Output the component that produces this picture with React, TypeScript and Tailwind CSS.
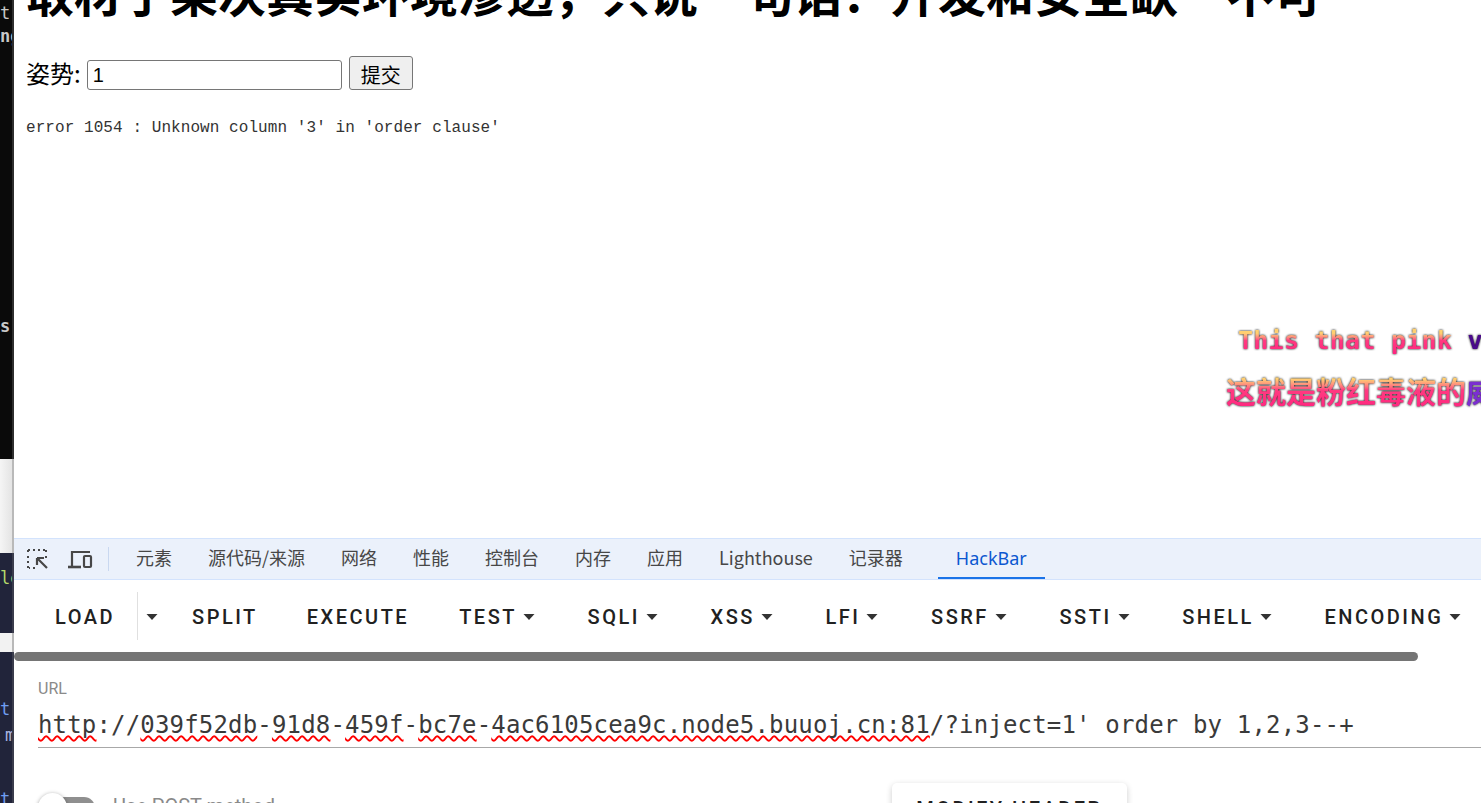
const tabs = ['元素', '源代码/来源', '网络', '性能', '控制台', '内存', '应用', 'Lighthouse', '记录器']
const menus = ['TEST', 'SQLI', 'XSS', 'LFI', 'SSRF', 'SSTI', 'SHELL', 'ENCODING']
const urlWords = ['039f52db', '91d8', '459f', 'bc7e']

function Caret() {
  return (
    <svg width="12" height="6" viewBox="0 0 12 6" className="shrink-0">
      <path d="M0.5 0h11L6 6z" fill="#333333" />
    </svg>
  )
}

function Squiggle({ children }: { children: React.ReactNode }) {
  return <span className="underline decoration-wavy decoration-[#ff0000] decoration-[1.5px] underline-offset-[2px] [text-decoration-skip-ink:none]">{children}</span>
}

function SideStrip() {
  return (
    <div className="w-[14px] shrink-0 flex flex-col overflow-hidden font-['DejaVu_Sans_Mono',monospace] text-[17px] leading-[26px]">
      <div className="h-[459px] bg-[#0a0a0a] border-r-2 border-[#2e2e2e] text-[#c8c8c8] overflow-hidden">
        <div className="whitespace-nowrap">t</div>
        <div className="-mt-[3px] whitespace-nowrap font-bold">ng</div>
        <div className="mt-[264px] whitespace-nowrap font-bold">s</div>
      </div>
      <div className="h-[94px] bg-gradient-to-r from-[#f5f5f5] to-[#e4e4e4] border-r-2 border-[#b9b9b9]" />
      <div className="h-[80px] bg-[#21243a] border-r-2 border-[#3a3c4c] pt-3 text-[#b5d96b] overflow-hidden whitespace-nowrap">le</div>
      <div className="h-[19px] bg-[#f2f2f2] border-r-2 border-[#b9b9b9]" />
      <div className="flex-1 bg-[#21243a] border-r-2 border-[#3a3c4c] pt-[44px] text-[#6f9df0] overflow-hidden whitespace-nowrap">
        <div>t:</div>
        <div className="pl-[5px] text-[#a9b4e0]">m</div>
        <div className="mt-[38px]">t:</div>
      </div>
    </div>
  )
}

function PageArea() {
  return (
    <div className="relative h-[538px] shrink-0 overflow-hidden bg-white pl-3 text-black font-['Noto_Sans_CJK_SC',sans-serif]">
      <h1 className="text-[48px] leading-[56px] font-bold whitespace-nowrap -mt-[37px]">取材于某次真实环境渗透，只说一句话：开发和安全缺一不可</h1>
      <form className="flex items-end mt-[37px] text-[24px] leading-[34px]">
        <span className="mr-[6px]">姿势:</span>
        <input
          readOnly
          value="1"
          className="w-[255px] h-[30px] rounded-[3px] border border-[#767676] bg-white px-[5px] text-[20px] font-['Liberation_Sans',sans-serif] outline-none"
        />
        <button type="button" className="ml-[7px] w-[64px] h-[34px] pt-[3px] rounded-[3px] border border-[#767676] bg-[#efefef] text-[20px] leading-none">提交</button>
      </form>
      <p className="mt-[27px] font-['Liberation_Mono',monospace] text-[16px] leading-[22px] tracking-[0.07px] text-[#333333] whitespace-nowrap">error 1054 : Unknown column '3' in 'order clause'</p>

      <div className="absolute left-[1224px] top-[325px] font-['DejaVu_Sans_Mono',monospace] font-bold text-[25px] leading-[32px] tracking-[0.25px] whitespace-nowrap [filter:drop-shadow(0_0_1px_#000)]">
        <span className="bg-gradient-to-b from-[#ffd070] from-[25%] via-[#ff3a80] via-[50%] to-[#ff2080] bg-clip-text text-transparent">This that pink </span>
        <span className="text-[#4a0a8c]">v</span>
      </div>
      <div className="absolute left-[1212px] top-[370px] font-['Noto_Sans_CJK_SC',sans-serif] font-bold text-[30px] leading-[40px] whitespace-nowrap [filter:drop-shadow(0_0_1px_#000)]">
        <span className="bg-gradient-to-b from-[#ffd070] from-[25%] via-[#ff3a80] via-[50%] to-[#ff2080] bg-clip-text text-transparent">这就是粉红毒液的</span>
        <span className="text-[#7b2fd0]">威力</span>
      </div>
    </div>
  )
}

function TabBar() {
  return (
    <div className="h-[42px] shrink-0 flex items-stretch bg-[#ebf1fb] border-y border-[#d3e3fd] text-[18px] text-[#474747] font-['Noto_Sans_CJK_SC',sans-serif] whitespace-nowrap">
      <div className="flex items-center pl-[12px] pr-[9px]">
        <svg width="24" height="24" viewBox="0 0 24 24" fill="none" className="shrink-0">
          <path d="M2 3h2M7 3h2M12 3h2M17 3h3v3M2 3v3M2 9v2M2 14v2M2 19v2h2M7 21h3M20 9v2" stroke="#474747" strokeWidth="2" strokeDasharray="2 1" />
          <path d="M11 11l10 10M11 11h7M11 11v7" stroke="#474747" strokeWidth="2.2" />
        </svg>
        <svg width="26" height="24" viewBox="0 0 26 24" fill="none" className="ml-[17px] shrink-0">
          <path d="M5 19V5h18" stroke="#474747" strokeWidth="2.2" />
          <path d="M1 20h13" stroke="#474747" strokeWidth="2.6" />
          <rect x="17" y="9" width="7" height="11" rx="1" stroke="#474747" strokeWidth="2.2" />
        </svg>
        <div className="ml-[15px] w-px h-[24px] bg-[#c9d8f0]" />
      </div>
      <div className="flex items-stretch">
        {tabs.map((tab) => (
          <div key={tab} className="flex items-center px-[18px] -mt-[3px]">{tab}</div>
        ))}
        <div className="flex items-center ml-[17px] px-[18px] text-[#0b57d0] border-b-2 border-[#1a73e8] font-['Noto_Sans',sans-serif]">HackBar</div>
      </div>
    </div>
  )
}

function ActionBar() {
  return (
    <div className="h-[72px] shrink-0 flex items-center pl-[41px] pt-[2px] text-[20px] font-medium tracking-[2.5px] text-[#212121] font-['Roboto',sans-serif] whitespace-nowrap">
      <span>LOAD</span>
      <div className="ml-[22px] -mt-[2px] w-px h-[48px] bg-[#e0e0e0]" />
      <div className="ml-[8px]"><Caret /></div>
      <span className="ml-[34px]">SPLIT</span>
      <span className="ml-[49px]">EXECUTE</span>
      {menus.map((menu, i) => (
        <div key={menu} className={i === 0 ? 'ml-[50px] flex items-center gap-[6px] shrink-0' : 'ml-[52.6px] flex items-center gap-[6px] shrink-0'}>
          <span>{menu}</span>
          <Caret />
        </div>
      ))}
    </div>
  )
}

function UrlForm() {
  return (
    <div className="flex-1 pl-[24px] font-['Roboto',sans-serif]">
      <div className="mt-[19px] text-[16px] leading-[18px] text-[#8a8a8a]">URL</div>
      <div className="mt-[9px] h-[41px] border-b border-[#a8a8a8] font-['DejaVu_Sans_Mono',monospace] text-[24px] leading-[36px] tracking-[0.17px] text-[#3a3a3a] whitespace-nowrap">
        <Squiggle>http</Squiggle>://
        {urlWords.map((word) => (
          <span key={word}>
            <Squiggle>{word}</Squiggle>-
          </span>
        ))}
        <Squiggle>4ac6105cea9c.node5.buuoj.cn:81</Squiggle>/?inject=1' order by 1,2,3--+
      </div>
      <div className="relative flex items-start">
        <div className="relative mt-[45px] w-[57px] h-[30px] shrink-0">
          <div className="absolute right-0 top-[4px] w-[44px] h-[22px] rounded-full bg-[#8f8f8f]" />
          <div className="absolute left-0 top-0 w-[29px] h-[29px] rounded-full bg-white shadow-[0_1px_4px_rgba(0,0,0,0.4)]" />
        </div>
        <div className="mt-[44px] ml-[18px] text-[20px] leading-[28px] text-[#8a8a8a] whitespace-nowrap">Use POST method</div>
        <div className="absolute left-[854px] top-[35px] w-[235px] h-[60px] rounded-[5px] bg-white shadow-[0_2px_6px_rgba(0,0,0,0.2)] text-center pt-[11px] text-[20px] font-medium tracking-[2.5px] text-[#212121]">MODIFY HEADER</div>
      </div>
    </div>
  )
}

export default function App() {
  return (
    <div className="flex h-[803px] w-[1481px] overflow-hidden bg-white">
      <SideStrip />
      <div className="flex-1 min-w-0 flex flex-col overflow-hidden">
        <PageArea />
        <TabBar />
        <ActionBar />
        <div className="h-[9px] w-[1404px] shrink-0 rounded-full bg-[#757575]" />
        <UrlForm />
      </div>
    </div>
  )
}
